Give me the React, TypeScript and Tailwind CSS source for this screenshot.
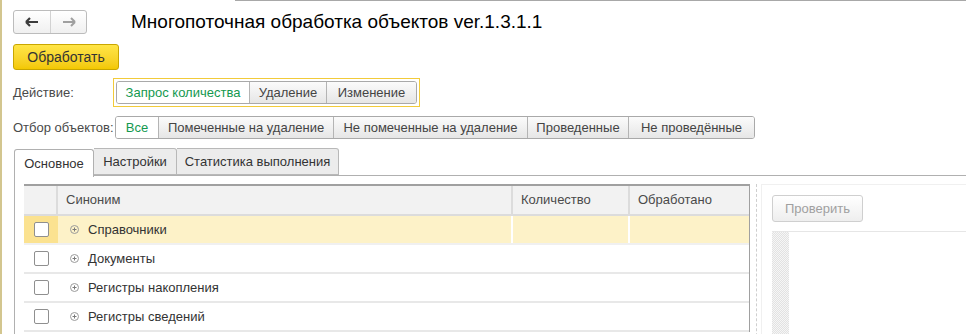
import React from "react";

const actions = ["Запрос количества", "Удаление", "Изменение"];
const actionWidths = ["w-[132px]", "w-[77px]", "w-[90px]"];

const filters = [
  "Все",
  "Помеченные на удаление",
  "Не помеченные на удаление",
  "Проведенные",
  "Не проведённые",
];
const filterWidths = ["w-[42px]", "w-[175px]", "w-[194px]", "w-[101px]", "w-[126px]"];

const rows = ["Справочники", "Документы", "Регистры накопления", "Регистры сведений"];

const PlusIcon = () => (
  <svg width="9" height="9" viewBox="0 0 9 9" className="shrink-0">
    <circle cx="4.5" cy="4.5" r="4" fill="none" stroke="#9a9a9a" strokeWidth="1" />
    <path d="M2.5 4.5h4M4.5 2.5v4" stroke="#7a7a7a" strokeWidth="1" />
  </svg>
);

const Segmented = ({
  items,
  widths,
  active,
}: {
  items: string[];
  widths: string[];
  active: number;
}) => (
  <div className="flex h-[23px] rounded-[3px] border border-[#a9a9a9] overflow-hidden">
    {items.map((item, i) => (
      <div
        key={item}
        className={
          "flex items-center justify-center text-[13px] " +
          widths[i] +
          (i > 0 ? " border-l border-[#b4b4b4]" : "") +
          (i === active
            ? " bg-white text-[#14994f]"
            : " bg-gradient-to-b from-[#fbfbfb] to-[#e6e6e6] text-[#444]")
        }
      >
        {item}
      </div>
    ))}
  </div>
);

export default function App() {
  return (
    <div
      className="w-[966px] h-[334px] overflow-hidden bg-white border-l-2 border-[#d3c68f] text-[#444]"
      style={{ fontFamily: '"Liberation Sans", Arial, sans-serif' }}
    >
      <div className="h-px ml-[233px] bg-[#a8a8a8]" />

      {/* Header */}
      <div className="flex items-center mt-[9px] pl-[11px] h-[24px]">
        <div className="flex w-[74px] h-[24px] rounded-[3px] border border-[#bcbcbc] bg-gradient-to-b from-white to-[#f0f0f0]">
          <div className="w-[37px] flex items-center justify-center border-r border-[#d2d2d2]">
            <svg width="14" height="10" viewBox="0 0 14 10">
              <path d="M1 5h12M1 5l4-4M1 5l4 4" stroke="#3c3c3c" strokeWidth="2.2" fill="none" />
            </svg>
          </div>
          <div className="flex-1 flex items-center justify-center">
            <svg width="14" height="10" viewBox="0 0 14 10">
              <path d="M13 5H1M13 5L9 1M13 5L9 9" stroke="#a0a0a0" strokeWidth="2" fill="none" />
            </svg>
          </div>
        </div>
        <div className="ml-[44px] text-[19px] text-black leading-none pb-[1px]">
          Многопоточная обработка объектов ver.1.3.1.1
        </div>
      </div>

      {/* Main button */}
      <div className="mt-[10px] ml-[11px] w-[106px] h-[26px] rounded-[3px] border border-[#c9a600] bg-gradient-to-b from-[#ffe545] to-[#f3c800] flex items-center justify-center text-[14px] text-[#333]">
        Обработать
      </div>

      {/* Action */}
      <div className="flex items-center mt-[8px] pl-[11px]">
        <div className="w-[100px] text-[13px] text-[#4a4a4a]">Действие:</div>
        <div className="border border-[#f2cb3a] p-[2px]">
          <Segmented items={actions} widths={actionWidths} active={0} />
        </div>
      </div>

      {/* Filter */}
      <div className="flex items-center mt-[9px] pl-[11px]">
        <div className="w-[102px] text-[13px] text-[#4a4a4a]">Отбор объектов:</div>
        <Segmented items={filters} widths={filterWidths} active={0} />
      </div>

      {/* Tabs */}
      <div className="flex mt-[9px] ml-[12px] h-[28px] border-b border-[#b0b0b0]">
        <div className="w-[80px] h-[28px] border border-b-0 border-[#b0b0b0] rounded-t-[3px] bg-white flex items-center justify-center text-[13px] text-[#333] relative top-px">
          Основное
        </div>
        <div className="w-[83px] h-[27px] border border-l-0 border-[#b8b8b8] rounded-tr-[3px] bg-[#ececec] flex items-center justify-center text-[13px] text-[#333]">
          Настройки
        </div>
        <div className="w-[162px] h-[27px] border border-l-0 border-[#b8b8b8] rounded-tr-[3px] bg-[#ececec] flex items-center justify-center text-[13px] text-[#333]">
          Статистика выполнения
        </div>
      </div>

      {/* Panel */}
      <div className="flex ml-[12px] border-l border-[#b0b0b0] pt-[8px] pl-[9px] h-[200px]">
        {/* Table */}
        <div className="w-[726px] border-t-2 border-r border-[#a0a0a0] self-start">
          <div className="flex h-[30px] bg-[#f2f2f2] border-b-2 border-[#dcdcdc] text-[13px] text-[#4a4a4a]">
            <div className="w-[34px] border-r-2 border-[#dcdcdc]" />
            <div className="w-[455px] pl-[8px] flex items-center border-r-2 border-[#dcdcdc]">Синоним</div>
            <div className="w-[117px] pl-[8px] flex items-center border-r-2 border-[#dcdcdc]">Количество</div>
            <div className="flex-1 pl-[8px] flex items-center">Обработано</div>
          </div>
          {rows.map((row, i) => (
            <div
              key={row}
              className={
                "flex h-[29px] border-b-2 text-[13px] text-[#333] " +
                (i === 0 ? "bg-[#fdf2c8] border-[#f0f0f0]" : "bg-white border-[#e8e8e8]")
              }
            >
              <div
                className={
                  "w-[34px] flex items-center justify-center " + (i === 0 ? "bg-[#fbe290]" : "")
                }
              >
                <div className="w-[15px] h-[15px] rounded-[2px] border border-[#8f8f8f] bg-white" />
              </div>
              <div
                className={
                  "w-[455px] flex items-center pl-[12px] gap-[9px] " +
                  (i === 0 ? "border-r-2 border-white" : "")
                }
              >
                <PlusIcon />
                <span>{row}</span>
              </div>
              <div className={"w-[117px] " + (i === 0 ? "border-r-2 border-white" : "")} />
              <div className="flex-1" />
            </div>
          ))}
        </div>

        {/* Splitter */}
        <div className="ml-[6px] w-0 border-l border-dashed border-[#cfcfcf] h-full" />

        {/* Right panel */}
        <div className="ml-[4px] flex-1 border-t border-l border-[#f0f0f0] pt-[10px] pl-[10px]">
          <div className="w-[91px] h-[27px] rounded-[3px] border border-[#cfcfcf] bg-gradient-to-b from-white to-[#eeeeee] flex items-center justify-center text-[13px] text-[#a0a0a0]">
            Проверить
          </div>
          <div className="mt-[9px] h-[120px] border-t border-[#e6e6e6] flex">
            <div
              className="w-[17px] h-full bg-[#ececec]"
              style={{
                backgroundImage:
                  "repeating-conic-gradient(#e2e2e2 0% 25%, #f6f6f6 0% 50%)",
                backgroundSize: "2px 2px",
              }}
            />
          </div>
        </div>
      </div>
    </div>
  );
}
